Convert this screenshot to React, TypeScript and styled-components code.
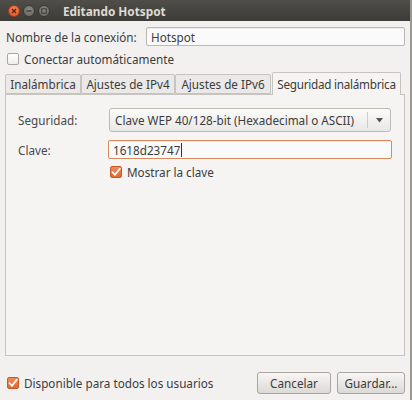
import React from "react";
import styled, { createGlobalStyle } from "styled-components";

const Global = createGlobalStyle`
  html, body { margin: 0; padding: 0; background: #f2f1f0; }
  body { font-family: "Noto Sans", "DejaVu Sans", sans-serif; font-size: 11.7px; color: #3c3c3c; }
`;

const Window = styled.div`
  width: 412px;
  height: 400px;
  display: flex;
  flex-direction: column;
  background: #f2f1f0;
  box-sizing: border-box;
  border-right: 2px solid #9a9893;
  overflow: hidden;
`;

const TitleBar = styled.div`
  height: 21px;
  flex: none;
  display: flex;
  align-items: center;
  padding-left: 8px;
  background: linear-gradient(#4f4e49, #3c3b37);
  color: #dfdbd2;
`;

const WinButtons = styled.div`
  display: flex;
  gap: 3px;
  margin-right: 13px;
`;

const WinBtn = styled.div<{ $kind: "close" | "min" | "max" }>`
  width: 12px;
  height: 12px;
  border-radius: 50%;
  display: flex;
  align-items: center;
  justify-content: center;
  background: ${(p) =>
    p.$kind === "close"
      ? "radial-gradient(circle at 50% 35%, #f6845a, #e2531f)"
      : "radial-gradient(circle at 50% 35%, #8a8984, #65645f)"};
  border: 1px solid ${(p) => (p.$kind === "close" ? "#a83c14" : "#3a3935")};
  box-sizing: border-box;
`;

const Title = styled.div`
  font-weight: bold;
  font-size: 11.8px;
`;

const Body = styled.div`
  flex: 1;
  display: flex;
  flex-direction: column;
  padding: 6px 5px 0 5px;
`;

const Row = styled.div`
  display: flex;
  align-items: center;
`;

const NameLabel = styled.div`
  width: 141px;
  flex: none;
  padding-left: 1px;
  box-sizing: border-box;
`;

const Entry = styled.div<{ $focus?: boolean }>`
  flex: 1;
  height: 19px;
  box-sizing: border-box;
  border: 1px solid ${(p) => (p.$focus ? "#d98a5b" : "#bcb8b2")};
  border-radius: 2px;
  background: #fafafa;
  box-shadow: inset 0 1px 1px rgba(0, 0, 0, 0.06);
  padding-left: 4px;
  display: flex;
  align-items: center;
  color: #3c3c3c;
`;

const Caret = styled.span`
  display: inline-block;
  width: 1px;
  height: 14px;
  background: #333;
  margin-left: 1px;
`;

const CheckRow = styled.div<{ $indent?: number }>`
  display: flex;
  align-items: center;
  gap: 5px;
  margin-left: ${(p) => p.$indent ?? 2}px;
`;

const Box = styled.div<{ $checked?: boolean }>`
  width: 12px;
  height: 12px;
  box-sizing: border-box;
  border-radius: 2px;
  border: 1px solid ${(p) => (p.$checked ? "#c65a27" : "#a9a6a0")};
  background: ${(p) =>
    p.$checked ? "linear-gradient(#f08a56, #df6a31)" : "linear-gradient(#ffffff, #eeedeb)"};
  display: flex;
  align-items: center;
  justify-content: center;
`;

const Tabs = styled.div`
  display: flex;
  align-items: flex-end;
  height: 22px;
  margin-top: 5px;
  position: relative;
  z-index: 1;
`;

const Tab = styled.div<{ $active?: boolean; $w: number }>`
  box-sizing: border-box;
  width: ${(p) => p.$w}px;
  height: ${(p) => (p.$active ? 23 : 20)}px;
  display: flex;
  align-items: center;
  justify-content: center;
  border: 1px solid #c7c4bf;
  border-bottom: ${(p) => (p.$active ? "none" : "1px solid #c7c4bf")};
  border-radius: 2px 2px 0 0;
  background: ${(p) => (p.$active ? "#f5f4f3" : "#eae9e7")};
  margin-bottom: ${(p) => (p.$active ? -1 : 0)}px;
  margin-left: ${(p) => (p.$active ? 1 : 0)}px;
  letter-spacing: ${(p) => (p.$active ? -0.25 : 0)}px;
  color: #3c3c3c;
  white-space: nowrap;
`;

const Panel = styled.div`
  height: 262px;
  box-sizing: border-box;
  border: 1px solid #c7c4bf;
  background: #f5f4f3;
  padding: 13px 12px 0 12px;
  display: flex;
  flex-direction: column;
`;

const FormRow = styled.div<{ $mt?: number }>`
  display: flex;
  align-items: center;
  margin-top: ${(p) => p.$mt ?? 0}px;
`;

const FormLabel = styled.div`
  width: 91px;
  flex: none;
  color: #4a4a4a;
`;

const Combo = styled.div`
  flex: none;
  width: 282px;
  height: 24px;
  box-sizing: border-box;
  border: 1px solid #bdb9b3;
  border-radius: 3px;
  background: linear-gradient(#fbfbfa, #e9e8e6);
  display: flex;
  align-items: center;
`;

const ComboText = styled.div`
  flex: 1;
  padding-left: 5px;
  color: #3c3c3c;
`;

const ComboArrow = styled.div`
  width: 22px;
  height: 16px;
  border-left: 1px solid #d0cdc8;
  display: flex;
  align-items: center;
  justify-content: center;
`;

const KeyEntry = styled(Entry)`
  flex: none;
  width: 284px;
  margin-left: -1px;
`;

const Footer = styled.div`
  display: flex;
  align-items: center;
  margin-top: 16px;
`;

const Spacer = styled.div`
  flex: 1;
`;

const Button = styled.div<{ $w: number }>`
  width: ${(p) => p.$w}px;
  height: 22px;
  box-sizing: border-box;
  border: 1px solid #aaa69f;
  border-radius: 3px;
  background: linear-gradient(#f7f6f5, #dcdad6);
  display: flex;
  align-items: center;
  justify-content: center;
  color: #3c3c3c;
  margin-left: 6px;
`;

const Gap = styled.div<{ $h: number }>`
  height: ${(p) => p.$h}px;
  flex: none;
`;

const Check = () => (
  <svg width="10" height="10" viewBox="0 0 10 10">
    <path d="M1.5 5.2 L4 7.8 L8.8 1.8" stroke="#fff" strokeWidth="1.8" fill="none" strokeLinecap="round" strokeLinejoin="round" />
  </svg>
);

export default function App() {
  return (
    <>
      <Global />
      <Window>
        <TitleBar>
          <WinButtons>
            <WinBtn $kind="close">
              <svg width="6" height="6" viewBox="0 0 6 6">
                <path d="M1 1 L5 5 M5 1 L1 5" stroke="#5a1a05" strokeWidth="1.2" />
              </svg>
            </WinBtn>
            <WinBtn $kind="min">
              <svg width="6" height="6" viewBox="0 0 6 6">
                <path d="M0.5 3 H5.5" stroke="#3a3935" strokeWidth="1.3" />
              </svg>
            </WinBtn>
            <WinBtn $kind="max">
              <svg width="6" height="6" viewBox="0 0 6 6">
                <rect x="0.8" y="0.8" width="4.4" height="4.4" stroke="#3a3935" strokeWidth="1" fill="none" />
              </svg>
            </WinBtn>
          </WinButtons>
          <Title>Editando Hotspot</Title>
        </TitleBar>
        <Body>
          <Row>
            <NameLabel>Nombre de la conexión:</NameLabel>
            <Entry>Hotspot</Entry>
          </Row>
          <Gap $h={5} />
          <CheckRow>
            <Box />
            <span>Conectar automáticamente</span>
          </CheckRow>
          <Tabs>
            <Tab $w={76}>Inalámbrica</Tab>
            <Tab $w={94}>Ajustes de IPv4</Tab>
            <Tab $w={96}>Ajustes de IPv6</Tab>
            <Tab $w={129} $active>Seguridad inalámbrica</Tab>
          </Tabs>
          <Panel>
            <FormRow>
              <FormLabel>Seguridad:</FormLabel>
              <Combo>
                <ComboText>Clave WEP 40/128-bit (Hexadecimal o ASCII)</ComboText>
                <ComboArrow>
                  <svg width="7" height="5" viewBox="0 0 7 5">
                    <path d="M0 0 H7 L3.5 4.5 Z" fill="#555" />
                  </svg>
                </ComboArrow>
              </Combo>
            </FormRow>
            <FormRow $mt={8}>
              <FormLabel>Clave:</FormLabel>
              <KeyEntry $focus>
                1618d23747
                <Caret />
              </KeyEntry>
            </FormRow>
            <FormRow $mt={5}>
              <FormLabel />
              <CheckRow $indent={1}>
                <Box $checked>
                  <Check />
                </Box>
                <span>Mostrar la clave</span>
              </CheckRow>
            </FormRow>
          </Panel>
          <Footer>
            <CheckRow>
              <Box $checked>
                <Check />
              </Box>
              <span>Disponible para todos los usuarios</span>
            </CheckRow>
            <Spacer />
            <Button $w={74}>Cancelar</Button>
            <Button $w={68}>Guardar...</Button>
          </Footer>
        </Body>
      </Window>
    </>
  );
}
